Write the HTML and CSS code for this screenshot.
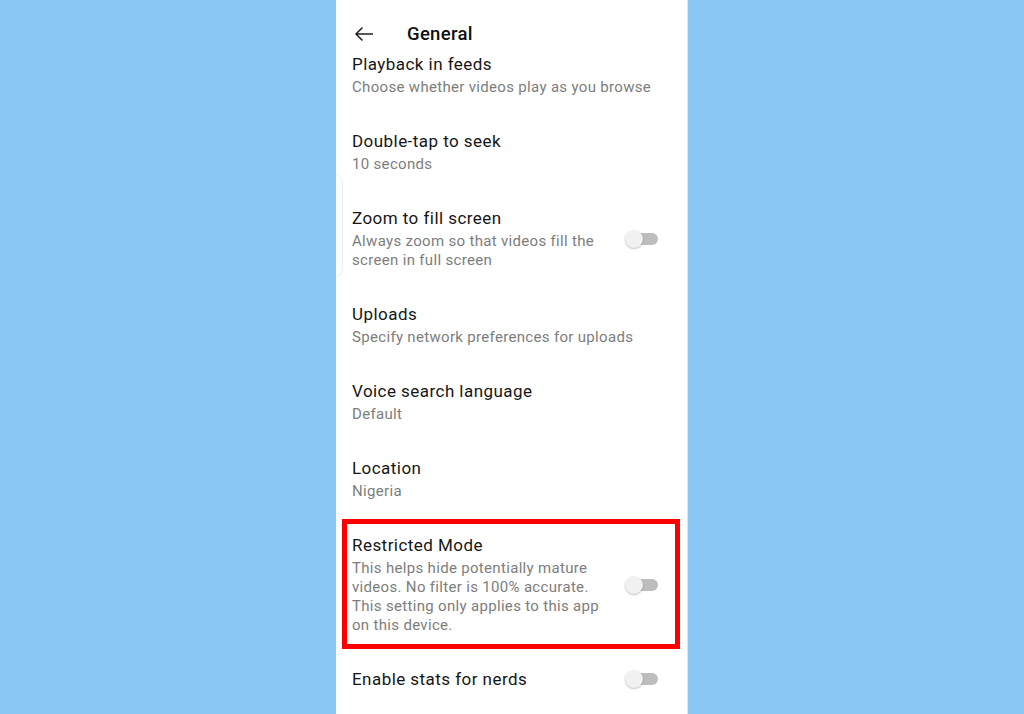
FILE: index.html
```html
<!DOCTYPE html>
<html>
<head>
<meta charset="utf-8">
<link rel="stylesheet" href="styles.css">
</head>
<body>
<div class="page">
  <div class="phone">
    <div class="edge-tab"></div>
    <header class="header">
      <svg class="back" width="20" height="16" viewBox="0 0 20 16"><path d="M19 8H2M8.5 1.5L2 8l6.5 6.5" fill="none" stroke="#222" stroke-width="1.5"/></svg>
      <span class="header-title">General</span>
    </header>
    <div class="list">
      <div class="item"><div class="text"><div class="title">Playback in feeds</div><div class="sub">Choose whether videos play as you browse</div></div></div>
      <div class="item"><div class="text"><div class="title">Double-tap to seek</div><div class="sub">10 seconds</div></div></div>
      <div class="item"><div class="text"><div class="title">Zoom to fill screen</div><div class="sub">Always zoom so that videos fill the<br>screen in full screen</div></div><div class="toggle"><span class="knob"></span></div></div>
      <div class="item"><div class="text"><div class="title">Uploads</div><div class="sub">Specify network preferences for uploads</div></div></div>
      <div class="item"><div class="text"><div class="title">Voice search language</div><div class="sub">Default</div></div></div>
      <div class="item"><div class="text"><div class="title">Location</div><div class="sub">Nigeria</div></div></div>
      <div class="item highlighted"><div class="text"><div class="title">Restricted Mode</div><div class="sub">This helps hide potentially mature<br>videos. No filter is 100% accurate.<br>This setting only applies to this app<br>on this device.</div></div><div class="toggle"><span class="knob"></span></div><div class="red-box"></div></div>
      <div class="item"><div class="text"><div class="title">Enable stats for nerds</div></div><div class="toggle"><span class="knob"></span></div></div>
    </div>
  </div>
</div>
</body>
</html>
```

FILE: styles.css
```css
html, body {
  margin: 0;
  padding: 0;
}
body {
  background: #8bc7f4;
  font-family: Roboto, "Noto Sans", sans-serif;
  overflow: hidden;
}
.page {
  height: 714px;
  display: flex;
  justify-content: center;
}
.phone {
  position: relative;
  width: 351px;
  height: 714px;
  background: #ffffff;
  border-right: 1px solid #d4e7f5;
  overflow: hidden;
}
.edge-tab {
  position: absolute;
  left: -10px;
  top: 174px;
  width: 15px;
  height: 102px;
  border: 1px solid #ececec;
  border-radius: 10px;
}
.header {
  display: flex;
  align-items: center;
  height: 24px;
  padding: 22px 0 0 18px;
}
.back {
  display: block;
}
.header-title {
  margin-left: 33px;
  font-size: 18.5px;
  font-weight: 500;
  letter-spacing: 0.3px;
  color: #0f0f0f;
  line-height: 24px;
}
.list {
  display: flex;
  flex-direction: column;
  margin-top: -10px;
}
.item {
  position: relative;
  display: flex;
  align-items: center;
  padding: 17px 28px 16px 16px;
}
.text {
  flex: 1;
}
.title {
  font-size: 17px;
  line-height: 22px;
  letter-spacing: 0.45px;
  color: #161616;
}
.sub {
  margin-top: 3px;
  font-size: 15px;
  line-height: 19px;
  letter-spacing: 0.32px;
  color: #7d7d7d;
}
.toggle {
  position: relative;
  width: 34px;
  height: 18px;
}
.toggle::before {
  content: "";
  position: absolute;
  left: 8px;
  top: 3px;
  width: 25px;
  height: 12px;
  border-radius: 6px;
  background: #bdbdbd;
}
.knob {
  position: absolute;
  left: 0;
  top: 0;
  width: 18px;
  height: 18px;
  border-radius: 50%;
  background: #f1f1f1;
  box-shadow: 0 1px 2px rgba(0,0,0,0.25);
}
.red-box {
  position: absolute;
  left: 6px;
  right: 7px;
  top: 2px;
  bottom: 2px;
  border: 5px solid #ff0000;
  pointer-events: none;
}
```
